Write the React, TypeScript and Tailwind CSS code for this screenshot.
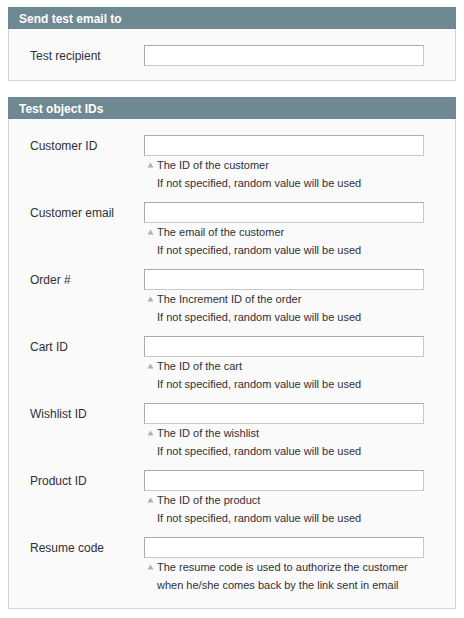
const rows = [
  { label: 'Customer ID', hint: 'The ID of the customer', note: 'If not specified, random value will be used' },
  { label: 'Customer email', hint: 'The email of the customer', note: 'If not specified, random value will be used' },
  { label: 'Order #', hint: 'The Increment ID of the order', note: 'If not specified, random value will be used' },
  { label: 'Cart ID', hint: 'The ID of the cart', note: 'If not specified, random value will be used' },
  { label: 'Wishlist ID', hint: 'The ID of the wishlist', note: 'If not specified, random value will be used' },
  { label: 'Product ID', hint: 'The ID of the product', note: 'If not specified, random value will be used' },
  {
    label: 'Resume code',
    hint: 'The resume code is used to authorize the customer',
    note: 'when he/she comes back by the link sent in email',
  },
]

function Input() {
  return (
    <input
      type="text"
      className="w-[280px] h-[21px] bg-white border border-[#c8c8c8] border-t-[#aaaaaa] border-l-[#aaaaaa] outline-none px-1 text-[12px]"
    />
  )
}

function Header({ title }: { title: string }) {
  return (
    <div className="h-[22px] bg-[#6f8992] pl-[11px] pt-px flex items-center text-white font-bold text-[12px]">
      {title}
    </div>
  )
}

export default function App() {
  return (
    <div
      className="w-[464px] min-h-[618px] bg-white px-2 pt-[7px] text-[#303036]"
      style={{ fontFamily: '"Liberation Sans", Arial, sans-serif' }}
    >
      <Header title="Send test email to" />
      <div className="bg-[#fafafa] border border-t-0 border-[#d6d6d6] pl-[21px] pt-4 pb-[14px]">
        <div className="flex">
          <label className="w-[114px] h-[21px] text-[12px] leading-[23px]">Test recipient</label>
          <Input />
        </div>
      </div>

      <div className="mt-4">
        <Header title="Test object IDs" />
        <div className="bg-[#fafafa] border border-t-0 border-[#d6d6d6] pl-[21px] pt-4 pb-[14px] flex flex-col gap-[10px]">
          {rows.map((r) => (
            <div key={r.label} className="flex">
              <label className="w-[114px] h-[21px] text-[12px] leading-[23px]">{r.label}</label>
              <div className="flex flex-col">
                <Input />
                <div className="text-[11px] leading-[18px]">
                  <div className="flex items-center">
                    <svg width="7" height="6" viewBox="0 0 7 6" className="ml-[3px] mr-[3px]">
                      <path d="M3.5 0.5 L6.5 5.5 L0.5 5.5 Z" fill="#b0b0b0" />
                    </svg>
                    <span>{r.hint}</span>
                  </div>
                  <div className="pl-[13px]">{r.note}</div>
                </div>
              </div>
            </div>
          ))}
        </div>
      </div>
    </div>
  )
}
